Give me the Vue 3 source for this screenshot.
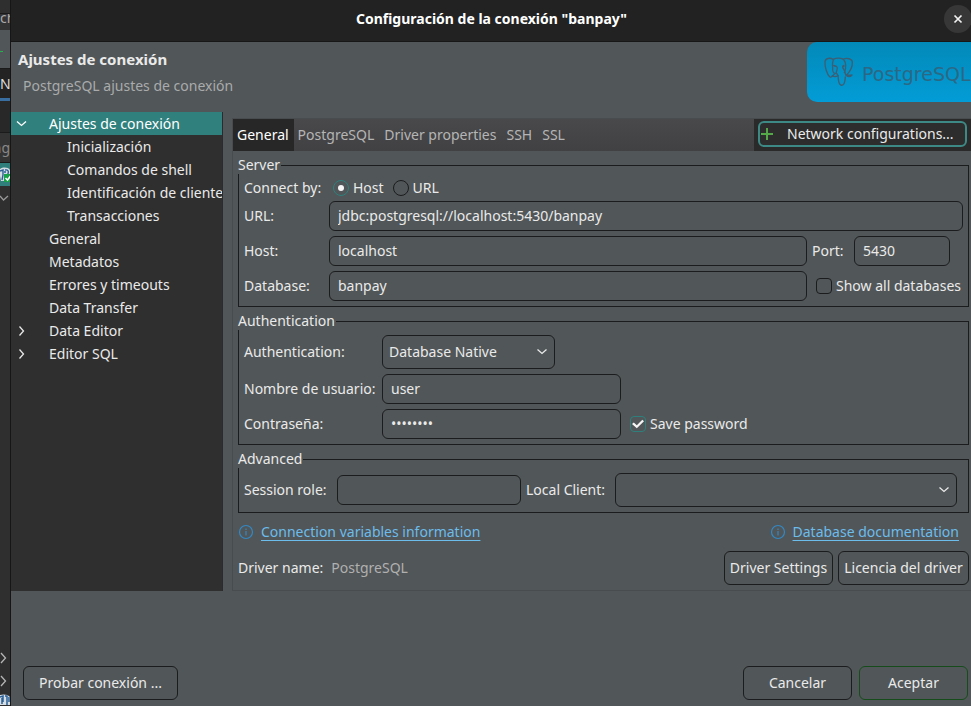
<script setup>
import { ref } from 'vue'

const tree = [
  { label: 'Ajustes de conexión', level: 0, arrow: 'down', selected: true },
  { label: 'Inicialización', level: 1 },
  { label: 'Comandos de shell', level: 1 },
  { label: 'Identificación de cliente', level: 1 },
  { label: 'Transacciones', level: 1 },
  { label: 'General', level: 0 },
  { label: 'Metadatos', level: 0 },
  { label: 'Errores y timeouts', level: 0 },
  { label: 'Data Transfer', level: 0 },
  { label: 'Data Editor', level: 0, arrow: 'right' },
  { label: 'Editor SQL', level: 0, arrow: 'right' },
]
const tabs = ['General', 'PostgreSQL', 'Driver properties', 'SSH', 'SSL']
const activeTab = ref('General')

const connectBy = ref('host')
const url = ref('jdbc:postgresql://localhost:5430/banpay')
const host = ref('localhost')
const port = ref('5430')
const database = ref('banpay')
const showAll = ref(false)
const authMode = ref('Database Native')
const user = ref('user')
const password = ref('password')
const savePassword = ref(true)
const sessionRole = ref('')
const localClient = ref('')
</script>

<template>
  <div class="screen">
    <aside class="behind">
      <div class="b-menu"></div>
      <div class="b-search"><span>ch</span></div>
      <div class="b-tools"><i></i></div>
      <div class="b-tab"><span>N</span></div>
      <div class="b-gap"></div>
      <div class="b-filter"><span>ng</span></div>
      <div class="b-selected">
        <svg width="11" height="16" viewBox="0 0 11 16">
          <path d="M0 2 C3 0 8 0 10 3 V9 H6 L4 14 H1 L0 9 Z" fill="#d5dde3" />
          <path d="M0 4 L3 3 V8 L2 13 M5 3 C9 2 9 6 7 8 M4 5 H6" fill="none" stroke="#2b5f96" stroke-width="1.4" />
          <rect x="4" y="7" width="7" height="8" fill="#18a34a" />
          <path d="M5.5 11 L7.5 13 L10.5 9" fill="none" stroke="#fff" stroke-width="1.5" />
        </svg>
      </div>
      <div class="b-node">
        <svg width="11" height="8" viewBox="0 0 11 8"><path d="M0 2 L3.500 6 L8 2" fill="none" stroke="#999" stroke-width="1.3" /></svg>
      </div>
      <div class="b-rest"></div>
      <div v-for="n in 2" :key="n" class="b-node">
        <svg width="11" height="12" viewBox="0 0 11 12"><path d="M1 1 L5.500 6 L1 11" fill="none" stroke="#b5b5b5" stroke-width="1.3" /></svg>
      </div>
      <div class="b-last">
        <svg width="11" height="11" viewBox="0 0 11 11">
          <path d="M0 1 C3 0 8 0 10 3 V11 H0 Z" fill="#d5dde3" />
          <path d="M0 3 L3 2 V8 M5 2 H7 V11 M9 3 V8 M2 4 V10" fill="none" stroke="#2b5f96" stroke-width="1.5" />
        </svg>
      </div>
    </aside>

    <main class="dialog">
      <header class="titlebar">
        <h1>Configuración de la conexión "banpay"</h1>
        <button class="close" type="button" aria-label="Cerrar">
          <svg width="10" height="10" viewBox="0 0 10 10"><path d="M1.500 1.500 L8.500 8.500 M8.500 1.500 L1.500 8.500" stroke="#f2f2f2" stroke-width="1.7" /></svg>
        </button>
      </header>

      <section class="banner">
        <div class="banner-text">
          <h2>Ajustes de conexión</h2>
          <p>PostgreSQL ajustes de conexión</p>
        </div>
        <div class="logo">
          <svg width="30" height="30" viewBox="0 0 90 90" fill="none" stroke="#3b6075" stroke-width="4" stroke-linecap="round" stroke-linejoin="round">
            <path d="M28 7 C17 1 4 4 3 14 C2 30 9 52 17 59 C22 63 27 56 31 51" />
            <path d="M28 7 C36 2 54 2 60 9 C67 19 66 34 61 47" />
            <path d="M58 6 C70 1 84 6 85 15 C86 29 76 46 67 55" />
            <path d="M28 8 C24 18 26 26 26 34 C25 42 28 50 36 50 L39 38 C42 30 38 26 27 25" />
            <path d="M25 56 C31 61 37 59 42 56 C44 65 41 78 50 84 C59 87 63 79 64 60" />
            <path d="M60 25 C54 26 55 32 60 38 C64 45 63 50 66 55 C72 60 79 60 84 54 C78 55 72 55 67 54" />
            <path d="M33 28 H37 M57 28 H60 M38 49 L42 56" />
          </svg>
          <span>PostgreSQL</span>
        </div>
      </section>

      <section class="body">
        <nav class="tree">
          <a
            v-for="n in tree"
            :key="n.label"
            href="#"
            class="node"
            :class="{ child: n.level === 1, selected: n.selected }"
          >
            <span class="arrow">
              <svg v-if="n.arrow === 'down'" width="12" height="8" viewBox="0 0 12 8"><path d="M1 1.500 L5.500 5.500 L10 1.500" fill="none" stroke="#fff" stroke-width="1.3" /></svg>
              <svg v-else-if="n.arrow === 'right'" width="12" height="12" viewBox="0 0 12 12"><path d="M3.500 1.500 L7.500 6 L3.500 10.500" fill="none" stroke="#e8e8e8" stroke-width="1.3" /></svg>
            </span>
            <span>{{ n.label }}</span>
          </a>
        </nav>

        <div class="folder">
          <div class="tabbar">
            <div class="tabs" role="tablist">
              <button
                v-for="t in tabs"
                :key="t"
                type="button"
                role="tab"
                class="tab"
                :class="{ active: t === activeTab }"
                @click="activeTab = t"
              >{{ t }}</button>
            </div>
            <div class="network">
              <button type="button">
                <svg width="12" height="12" viewBox="0 0 12 12"><path d="M6 0 V12 M0 6 H12" stroke="#55a848" stroke-width="2" /></svg>
                <span>Network configurations...</span>
              </button>
            </div>
          </div>

          <form class="pane" @submit.prevent>
            <fieldset class="server">
              <legend>Server</legend>
              <div class="connect">
                <span class="lead">Connect by:</span>
                <label class="option"><input v-model="connectBy" type="radio" name="by" value="host" />Host</label>
                <label class="option"><input v-model="connectBy" type="radio" name="by" value="url" />URL</label>
              </div>
              <div class="server-grid">
                <label for="url">URL:</label>
                <input id="url" v-model="url" class="wide" type="text" />
                <label for="host">Host:</label>
                <input id="host" v-model="host" type="text" />
                <div class="port">
                  <label for="port">Port:</label>
                  <input id="port" v-model="port" type="text" />
                </div>
                <label for="db">Database:</label>
                <input id="db" v-model="database" type="text" />
                <label class="option all"><input v-model="showAll" type="checkbox" />Show all databases</label>
              </div>
            </fieldset>

            <fieldset class="auth">
              <legend>Authentication</legend>
              <div class="auth-grid">
                <label for="mode">Authentication:</label>
                <div class="select mode">
                  <select id="mode" v-model="authMode"><option>Database Native</option></select>
                  <svg width="12" height="8" viewBox="0 0 12 8"><path d="M1.500 1.500 L6 5.500 L10.500 1.500" /></svg>
                </div>
                <label for="user">Nombre de usuario:</label>
                <input id="user" v-model="user" type="text" />
                <label for="pass">Contraseña:</label>
                <input id="pass" v-model="password" type="password" />
                <label class="option save"><input v-model="savePassword" type="checkbox" />Save password</label>
              </div>
            </fieldset>

            <fieldset class="advanced">
              <legend>Advanced</legend>
              <div class="advanced-grid">
                <label for="role">Session role:</label>
                <input id="role" v-model="sessionRole" type="text" />
                <label for="client" class="client">Local Client:</label>
                <div class="select">
                  <select id="client" v-model="localClient"><option value=""></option></select>
                  <svg width="12" height="8" viewBox="0 0 12 8"><path d="M1.500 1.500 L6 5.500 L10.500 1.500" /></svg>
                </div>
              </div>
            </fieldset>

            <div class="links">
              <div class="info">
                <svg width="16" height="16" viewBox="0 0 16 16"><circle cx="8" cy="8" r="6.500" /><path d="M8 4.500 V6 M8 7 V11.500" /></svg>
                <a href="#">Connection variables information</a>
              </div>
              <div class="info">
                <svg width="16" height="16" viewBox="0 0 16 16"><circle cx="8" cy="8" r="6.500" /><path d="M8 4.500 V6 M8 7 V11.500" /></svg>
                <a href="#">Database documentation</a>
              </div>
            </div>

            <div class="driver">
              <span>Driver name:</span>
              <span class="name">PostgreSQL</span>
              <button class="btn settings" type="button">Driver Settings</button>
              <button class="btn license" type="button">Licencia del driver</button>
            </div>
          </form>
        </div>
      </section>

      <footer class="actions">
        <button class="btn test" type="button">Probar conexión ...</button>
        <button class="btn cancel" type="button">Cancelar</button>
        <button class="btn ok" type="button">Aceptar</button>
      </footer>
    </main>
  </div>
</template>

<style>
body {
  margin: 0;
  background: #515658;
}
</style>

<style scoped>
* {
  box-sizing: border-box;
}
.screen {
  display: grid;
  grid-template-columns: 11px minmax(0, 1fr);
  min-height: 100vh;
  overflow: hidden;
  font: 14px/18px "Noto Sans", "Open Sans", sans-serif;
  color: #eaeaea;
  background: #515658;
}
button, input, select {
  font: inherit;
  color: inherit;
  margin: 0;
}
a {
  color: inherit;
}
svg {
  display: block;
  flex: none;
}

/* window edge behind the dialog */
.behind {
  display: flex;
  flex-direction: column;
  overflow: hidden;
  background: #2f2f2f;
  border-right: 1px solid #161616;
}
.behind > div {
  display: flex;
  align-items: center;
  flex: none;
  overflow: hidden;
}
.b-menu { height: 13px; }
.behind .b-search {
  align-items: flex-end;
  height: 17px;
  border-top: 1px solid #1b1b1b;
  background: #343434;
  color: #aaa;
}
.b-search span { line-height: 24px; }
.b-tools {
  height: 38px;
  background: #515658;
}
.b-tools i {
  width: 3px;
  height: 1px;
  margin-top: 4px;
  background: #25b14c;
}
.b-tab {
  height: 33px;
  border-top: 1px solid #1b1b1b;
  border-bottom: 3px solid #386fa0;
  background: #232323;
  color: #ddd;
}
.b-gap {
  height: 32px;
  border-bottom: 1px solid #1b1b1b;
  background: #282828;
}
.b-filter {
  height: 30px;
  justify-content: flex-end;
  border-bottom: 1px solid #1b1b1b;
  background: #343434;
  color: #888;
}
.behind .b-selected {
  height: 23px;
  background: #307f7c;
}
.b-node { height: 23px; }
.behind .b-rest { flex: 1; }
.b-last { height: 14px; align-items: flex-end; }

/* dialog */
.dialog {
  display: flex;
  flex-direction: column;
  min-width: 0;
}
.titlebar {
  display: grid;
  grid-template-columns: 28px 1fr 27px;
  align-items: center;
  height: 42px;
  padding-bottom: 4px;
  border-bottom: 1px solid #171717;
  background: #222;
}
h1, h2, p {
  margin: 0;
  font-size: 14px;
  line-height: 18px;
}
h2 { font-size: 15px; }
h1 {
  grid-column: 2;
  text-align: center;
  color: #fff;
}
.close {
  display: grid;
  place-items: center;
  width: 28px;
  height: 28px;
  padding: 0;
  border: 0;
  border-radius: 50%;
  background: #373737;
}
.banner {
  display: flex;
  justify-content: space-between;
  height: 70px;
}
.banner-text { padding: 8px 7px; }
.banner-text p {
  padding: 9px 5px;
  color: #a9abac;
}
.logo {
  display: flex;
  align-items: center;
  gap: 8px;
  width: 164px;
  height: 60px;
  padding-left: 17px;
  overflow: hidden;
  border-radius: 10px 0 0 10px;
  background: linear-gradient(#0289b8, #039cd6);
  color: #2b6884;
  font: 400 19px/24px "DejaVu Sans", sans-serif;
}
.logo span { padding-top: 4px; }

.body {
  display: flex;
  gap: 9px;
}
.tree {
  flex: none;
  width: 212px;
  overflow: hidden;
  border-right: 1px solid #292c2d;
  background: #2f2f2f;
}
.node {
  display: flex;
  align-items: center;
  height: 23px;
  white-space: nowrap;
  text-decoration: none;
}
.node.selected {
  background: #30807d;
  color: #fff;
}
.arrow {
  flex: none;
  width: 38px;
  padding-left: 5px;
}
.node.child .arrow { width: 56px; }

.folder {
  flex: 1;
  min-width: 0;
  margin-top: 6px;
  border: 1px solid #484c4e;
  border-right: 0;
}
.tabbar {
  display: flex;
  justify-content: space-between;
  height: 32px;
  background: linear-gradient(#49494b, #414144);
}
.tabs { display: flex; }
.tab {
  padding: 0 5px 0 4px;
  border: 0;
  background: none;
  color: #b5b5b5;
  white-space: nowrap;
}
.tab + .tab { padding-right: 6px; }
.tab.active {
  background: #272727;
  color: #fff;
}
.network {
  display: flex;
  padding: 2px 4px 4px;
  background: #2a2a2a;
}
.network button {
  display: flex;
  align-items: center;
  gap: 14px;
  width: 209px;
  padding: 0 1px;
  border: 2px solid #3d8986;
  border-radius: 6px;
  background: #2d2d2d;
  white-space: nowrap;
}

.pane { padding: 5px 2px 5px 5px; }
fieldset {
  min-width: 0;
  margin: 0 0 5px;
  padding: 0 5px 5px;
  border: 1px solid #1b1c1d;
}
legend {
  height: 18px;
  margin-left: -6px;
  padding: 0 1px 0 0;
  background: #515658;
}
input[type="text"], input[type="password"] {
  width: 100%;
  min-width: 0;
  height: 30px;
  padding: 0 8px 2px;
  border: 1px solid #1b1c1d;
  border-radius: 6px;
  outline: 0;
  background: transparent;
}
.connect {
  display: flex;
  gap: 9px;
  height: 27px;
}
.lead { width: 80px; align-self: center; }
.option {
  display: flex;
  align-items: center;
  gap: 4px;
  white-space: nowrap;
}
input[type="radio"], input[type="checkbox"] {
  appearance: none;
  flex: none;
  display: grid;
  place-items: center;
  width: 16px;
  height: 16px;
  border: 1px solid #1b1c1d;
  border-radius: 4px;
}
input[type="radio"] { border-radius: 50%; }
input:checked { border-color: #2f807d; }
input[type="radio"]:checked::after {
  content: "";
  width: 6px;
  height: 6px;
  border-radius: 50%;
  background: #f5f5f5;
}
input[type="checkbox"]:checked::after {
  content: "";
  width: 12px;
  height: 10px;
  background: #f5f5f5;
  clip-path: polygon(0 50%, 15% 36%, 40% 62%, 86% 8%, 100% 22%, 40% 92%);
}
.server-grid {
  display: grid;
  grid-template-columns: 85px minmax(0, 1fr) 156px;
  row-gap: 5px;
  align-items: center;
}
.wide { grid-column: 2 / 4; }
.port {
  display: flex;
  align-items: center;
  padding-left: 5px;
}
.port label { flex: none; width: 42px; }
.port input[type="text"] { width: 96px; }
.all { padding-left: 9px; }

.auth legend, .advanced legend { margin-bottom: 5px; }
.auth-grid {
  display: grid;
  grid-template-columns: 138px 239px 1fr;
  row-gap: 5px;
  align-items: center;
}
.auth-grid > label { white-space: nowrap; }
.auth-grid > label:not(.save) { grid-column: 1; }
.save { padding-left: 9px; }
.select {
  display: grid;
  align-items: center;
}
.select > * { grid-area: 1 / 1; }
.select svg {
  justify-self: end;
  margin-right: 7px;
  fill: none;
  stroke: #eaeaea;
  stroke-width: 1.3;
  pointer-events: none;
}
.mode { width: 173px; }
select {
  appearance: none;
  width: 100%;
  height: 34px;
  padding: 0 24px 0 6px;
  border: 1px solid #1b1c1d;
  border-radius: 6px;
  background: transparent;
}
.advanced-grid {
  display: grid;
  grid-template-columns: 93px 184px 94px minmax(0, 1fr);
  align-items: center;
  padding-right: 6px;
}
.client { padding-left: 5px; }

.links {
  display: flex;
  justify-content: space-between;
  padding: 5px 10px 5px 0;
}
.info {
  display: flex;
  align-items: center;
  gap: 7px;
  height: 18px;
  color: #6cbcec;
}
.info a {
  text-decoration-thickness: 1px;
  text-underline-offset: 3px;
}
.info svg {
  fill: none;
  stroke: #3289c7;
  stroke-width: 1.2;
}
.driver {
  display: flex;
  align-items: center;
  gap: 5px;
  padding-top: 5px;
}
.name {
  margin: 0 auto 0 3px;
  color: #b0b0b0;
}
.btn {
  height: 34px;
  padding: 0;
  border: 1px solid #1b1c1d;
  border-radius: 6px;
  background: transparent;
  white-space: nowrap;
}
.settings { width: 109px; }
.license { width: 131px; }

.actions {
  display: flex;
  gap: 7px;
  margin-top: auto;
  padding: 20px 3px 6px 12px;
}
.test {
  width: 155px;
  margin-right: auto;
}
.cancel, .ok { width: 109px; }
.ok { border-color: #164c1c; }
</style>
